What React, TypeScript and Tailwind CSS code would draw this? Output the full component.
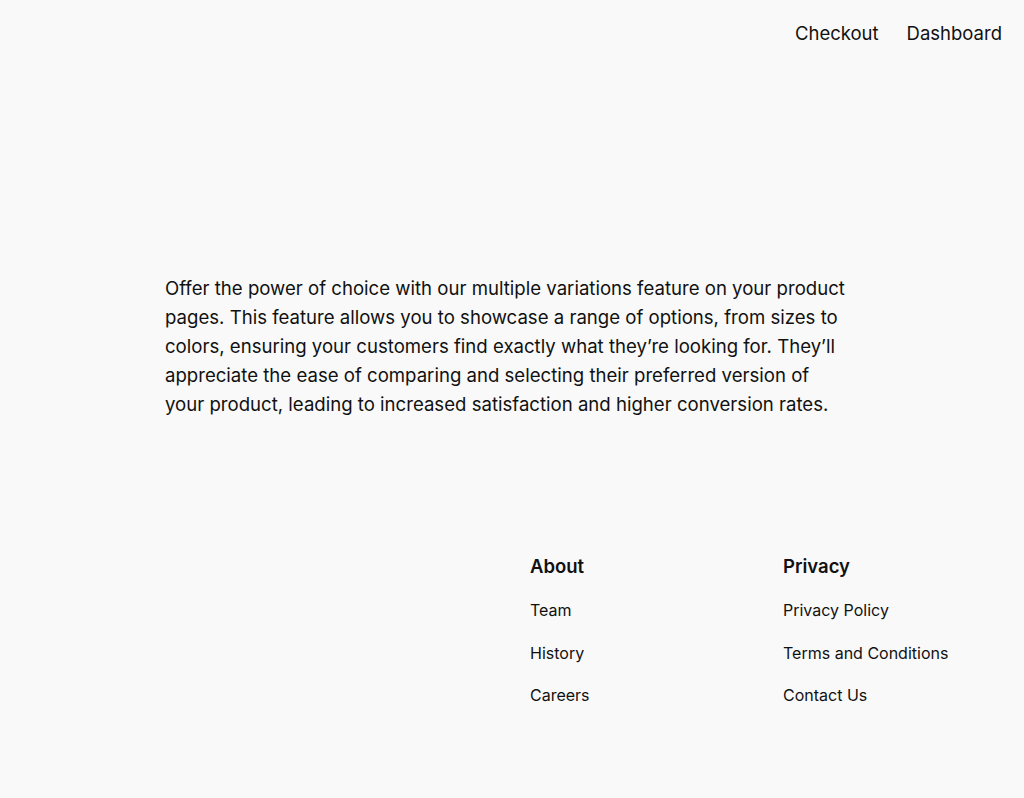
export default function App() {
  const columns = [
    { title: 'About', links: ['Team', 'History', 'Careers'] },
    { title: 'Privacy', links: ['Privacy Policy', 'Terms and Conditions', 'Contact Us'] },
  ]

  return (
    <div className="min-h-[798px] bg-[#f9f9f9] text-[#111111] font-['Inter',sans-serif] flex flex-col">
      <header className="flex justify-end gap-[28px] pr-[22px] pt-[21px] text-[18.5px] leading-6">
        <a href="#">Checkout</a>
        <a href="#">Dashboard</a>
      </header>

      <main className="pl-[165px] pt-[229px]">
        <p className="max-w-[684px] text-[18.6px] leading-[29px]">
          Offer the power of choice with our multiple variations feature on your product pages. This feature allows
          you to showcase a range of options, from sizes to colors, ensuring your customers find exactly what they’re
          looking for. They’ll appreciate the ease of comparing and selecting their preferred version of your product,
          leading to increased satisfaction and higher conversion rates.
        </p>
      </main>

      <footer className="flex pl-[530px] pt-[135px]">
        {columns.map(col => (
          <div key={col.title} className="w-[253px] shrink-0">
            <h3 className="text-[18.5px] font-semibold leading-6">{col.title}</h3>
            <ul className="mt-[20px] flex flex-col gap-[18.5px] text-[16px] leading-6">
              {col.links.map(l => (
                <li key={l}>
                  <a href="#">{l}</a>
                </li>
              ))}
            </ul>
          </div>
        ))}
      </footer>
    </div>
  )
}
